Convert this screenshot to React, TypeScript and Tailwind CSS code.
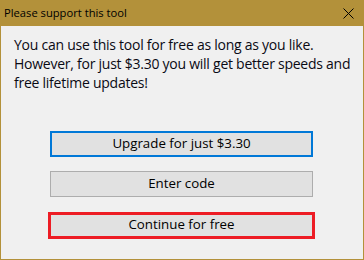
export default function App() {
  return (
    <div
      className="w-[364px] h-[260px] flex flex-col border border-t-0 border-[#b3913a] bg-[#f0f0f0]"
      style={{ fontFamily: '"Open Sans", "Noto Sans", sans-serif' }}
    >
      <div className="h-[26px] bg-[#b3913a] flex items-center justify-between pl-[3px] pr-[9px]">
        <span className="text-[11.2px] text-black">Please support this tool</span>
        <svg width="11" height="11" viewBox="0 0 11 11" className="text-black">
          <path d="M0.5 0.5 L10.5 10.5 M10.5 0.5 L0.5 10.5" stroke="currentColor" strokeWidth="1" />
        </svg>
      </div>

      <div className="pl-[13px] pt-[9px] text-[14px] tracking-[-0.25px] leading-[19px] text-[#0a0a14] whitespace-nowrap">
        <p>You can use this tool for free as long as you like.</p>
        <p>However, for just $3.30 you will get better speeds and</p>
        <p>free lifetime updates!</p>
      </div>

      <div className="ml-[49px] mt-[39px] flex flex-col w-[263px]">
        <button className="h-[26px] bg-[#e1e1e1] border-2 border-[#0078d7] text-[13.3px] text-black">
          Upgrade for just $3.30
        </button>
        <button className="mt-[14px] h-[26px] bg-[#e1e1e1] border border-[#adadad] text-[13.3px] text-black">
          Enter code
        </button>
        <div className="relative mt-[14px]">
          <button className="w-full h-[26px] bg-[#e1e1e1] border border-[#adadad] text-[13.3px] text-black">
            Continue for free
          </button>
          <div className="absolute left-[-2px] top-[1px] w-[267px] h-[27px] border-[3px] border-[#ed1c24] pointer-events-none" />
        </div>
      </div>
    </div>
  );
}
